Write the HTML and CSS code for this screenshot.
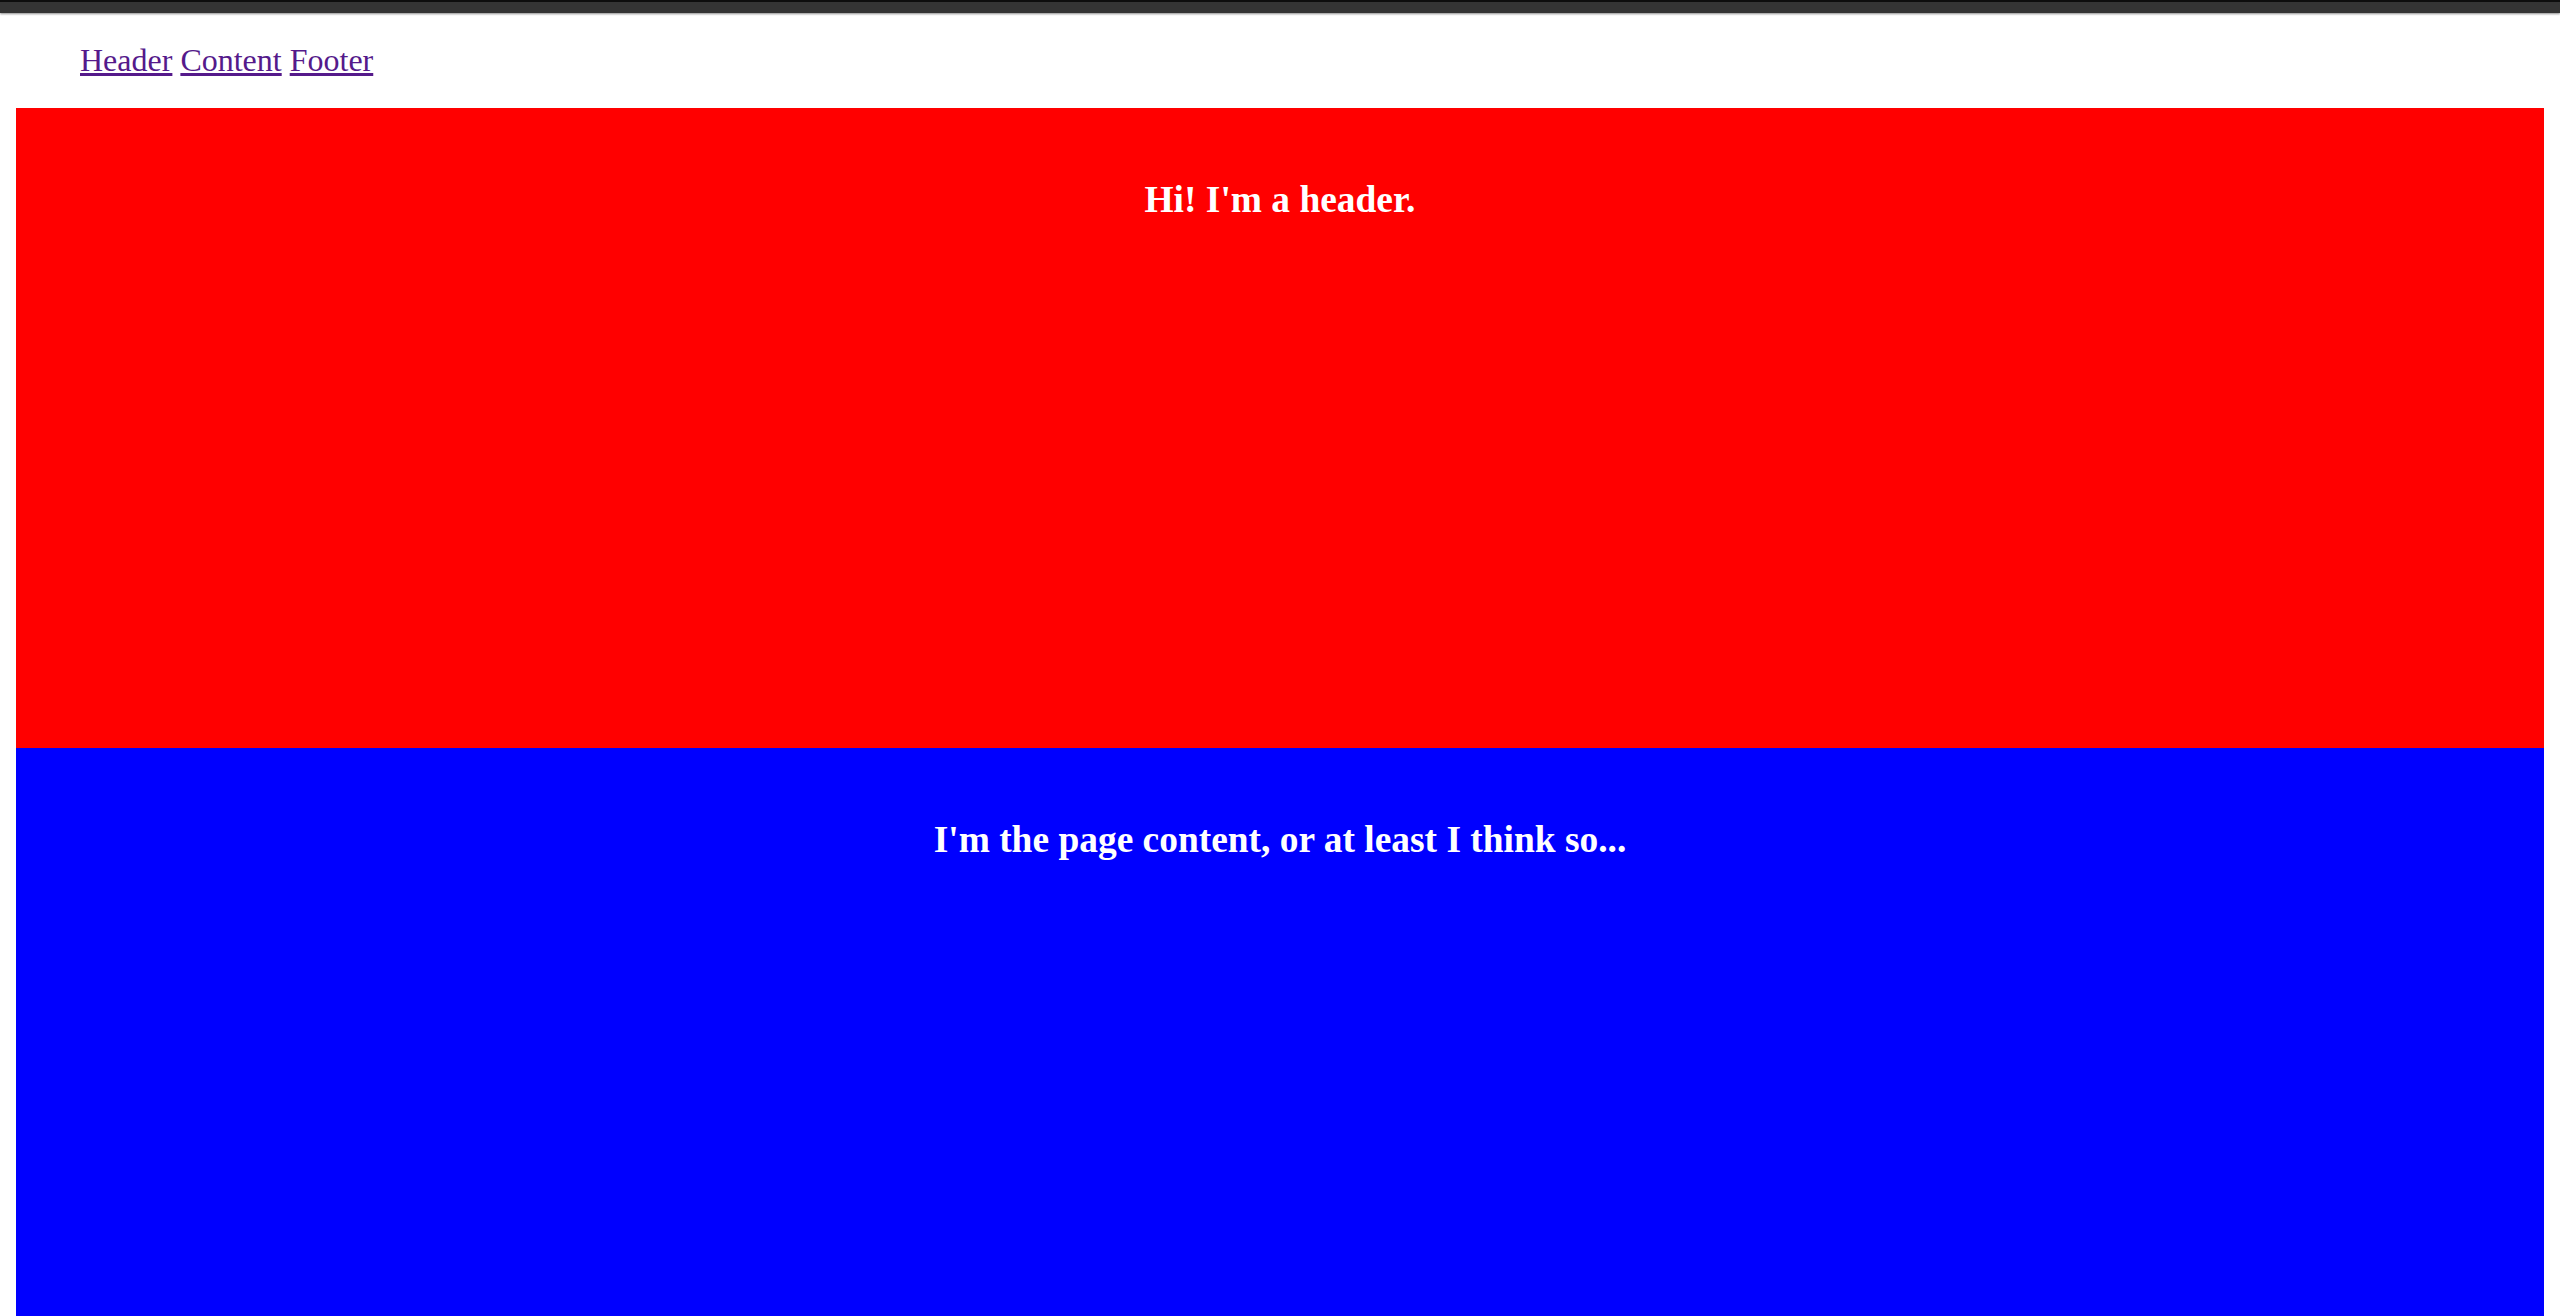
FILE: index.html
```
<!DOCTYPE html>
<html>
<head>
<meta charset="utf-8">
<title>Sections</title>
<link rel="stylesheet" href="styles.css">
</head>
<body>
<div class="topbar"></div>
<nav class="nav">
  <a href="#header">Header</a> <a href="#content">Content</a> <a href="#footer">Footer</a>
</nav>
<main class="sections">
  <section class="section section-header" id="header">
    <h3 class="section-title">Hi! I'm a header.</h3>
  </section>
  <section class="section section-content" id="content">
    <h3 class="section-title">I'm the page content, or at least I think so...</h3>
  </section>
</main>
</body>
</html>
```
FILE: styles.css
```
html, body {
  margin: 0;
  padding: 0;
  background: #fff;
}
body {
  font-family: "Liberation Serif", "Times New Roman", serif;
  font-size: 32px;
}
.topbar {
  height: 11px;
  background: #343434;
  border-top: 2px solid #0d0d0d;
  box-shadow: 0 1px 2px rgba(0, 0, 0, 0.45);
}
.nav {
  padding: 29px 0 0 80px;
  margin-bottom: 30px;
  line-height: 36px;
}
.nav a {
  color: #551a8b;
  text-decoration: underline;
}
.sections {
  margin: 0 16px;
}
.section {
  height: 640px;
  padding: 32px 0 0;
  box-sizing: border-box;
  text-align: center;
  color: #fff;
}
.section-header {
  background: #ff0000;
}
.section-content {
  background: #0000ff;
}
.section-title {
  margin: 37.5px 0 0;
  font-size: 37.44px;
  font-weight: bold;
  line-height: normal;
}
```
